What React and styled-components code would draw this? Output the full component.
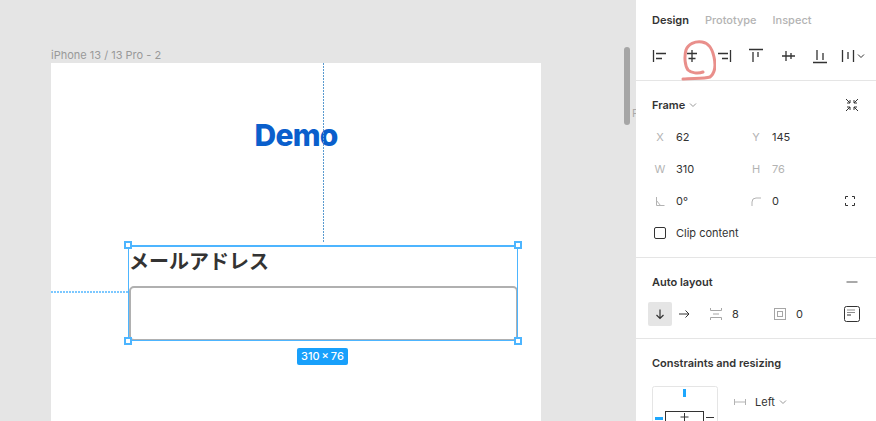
import styled, { createGlobalStyle } from "styled-components";

const GlobalStyle = createGlobalStyle`
  html, body {
    margin: 0;
    height: 100%;
    overflow: hidden;
    background: #e5e5e5;
  }
  #root {
    height: 100%;
  }
`;

const Page = styled.div`
  display: flex;
  width: 876px;
  height: 421px;
  overflow: hidden;
  font-family: Inter, "Liberation Sans", sans-serif;
  font-size: 11px;
  color: #333;
`;

/* canvas */

const Canvas = styled.div`
  position: relative;
  width: 636px;
  flex-shrink: 0;
  overflow: hidden;
  background: #e5e5e5;
  padding: 48px 0 0 51px;
  box-sizing: border-box;
`;

const FrameLabel = styled.div`
  height: 15px;
  line-height: 14px;
  font-size: 11px;
  color: #999;
`;

const Frame = styled.div`
  position: relative;
  width: 490px;
  height: 400px;
  background: #fff;
  padding-top: 55px;
  box-sizing: border-box;
`;

const Demo = styled.h1`
  margin: 0;
  height: 34px;
  line-height: 34px;
  text-align: center;
  font-size: 30px;
  font-weight: 800;
  letter-spacing: -0.75px;
  color: #0a5fcc;
`;

const Form = styled.div`
  position: relative;
  display: flex;
  flex-direction: column;
  gap: 8px;
  width: 390px;
  height: 96px;
  margin: 93px 0 0 77px;
`;

const FieldLabel = styled.div`
  height: 33px;
  line-height: 31px;
  padding-left: 1px;
  font-family: "Noto Sans CJK JP", sans-serif;
  font-size: 20px;
  font-weight: 700;
  color: #333;
`;

const Input = styled.div`
  flex: 1;
  margin-left: 1px;
  border: 2px solid #b0b0b0;
  border-radius: 5px;
`;

const Selection = styled.div`
  position: absolute;
  inset: 0;
  border-style: solid;
  border-color: #4db5ff;
  border-width: 2px 1px 1px;
`;

const Handle = styled.span`
  position: absolute;
  width: 4px;
  height: 4px;
  background: #fff;
  border: 2px solid #4db5ff;
  left: ${(p) => (p.$right ? "auto" : "-4px")};
  right: ${(p) => (p.$right ? "-4px" : "auto")};
  top: ${(p) => (p.$bottom ? "auto" : "-4px")};
  bottom: ${(p) => (p.$bottom ? "-4px" : "auto")};
`;

const SizeBadge = styled.div`
  position: absolute;
  left: 169px;
  top: 103px;
  height: 17px;
  line-height: 17px;
  padding: 0 4px;
  border-radius: 2px;
  background: #18a0fb;
  color: #fff;
  font-size: 11px;
  font-weight: 500;
  word-spacing: -1px;
  white-space: nowrap;
`;

const GuideV = styled.div`
  position: absolute;
  left: 272px;
  top: 0;
  width: 1px;
  height: 180px;
  background: repeating-linear-gradient(to bottom, #5a9bd0 0 2px, transparent 2px 3px);
`;

const GuideH = styled.div`
  position: absolute;
  left: 0;
  top: 228px;
  width: 77px;
  height: 2px;
  background: repeating-linear-gradient(to right, #7cc8ff 0 2px, transparent 2px 3px);
`;

const Scrollbar = styled.div`
  position: absolute;
  left: 624px;
  top: 47px;
  width: 6px;
  height: 78px;
  border-radius: 3px;
  background: #a6a6a6;
`;

const ClippedLabel = styled.div`
  position: absolute;
  left: 632px;
  top: 106px;
  font-size: 11px;
  color: #aaa;
`;

/* panel */

const Panel = styled.div`
  position: relative;
  width: 240px;
  flex-shrink: 0;
  background: #fff;
  overflow: hidden;
`;

const Tabs = styled.div`
  display: flex;
  gap: 16px;
  height: 40px;
  padding-left: 16px;
  align-items: center;
`;

const Tab = styled.span`
  font-weight: ${(p) => (p.$active ? 600 : 500)};
  color: ${(p) => (p.$active ? "#333" : "#b3b3b3")};
`;

const AlignRow = styled.div`
  display: flex;
  height: 40px;
  padding-left: 8px;
  align-items: flex-start;
  border-bottom: 1px solid #e5e5e5;
`;

const IconCell = styled.div`
  display: flex;
  width: ${(p) => p.$w || 32}px;
  height: 32px;
  margin-left: ${(p) => p.$shift || 0}px;
  align-items: center;
  justify-content: center;
`;

const Section = styled.section`
  padding-top: 8px;
  padding-bottom: ${(p) => p.$bottom || 0}px;
  border-bottom: ${(p) => (p.$open ? "none" : "1px solid #e5e5e5")};
`;

const SectionHead = styled.div`
  display: flex;
  align-items: center;
  justify-content: space-between;
  height: 32px;
  padding: 0 16px;
`;

const SectionTitle = styled.div`
  display: flex;
  align-items: center;
  gap: 4px;
  font-weight: 600;
  color: #333;
`;

const PropRow = styled.div`
  display: grid;
  grid-template-columns: 24px 72px 24px 72px 16px;
  align-items: center;
  height: 32px;
  padding-left: 16px;
`;

const PropLabel = styled.span`
  display: flex;
  justify-content: center;
  padding-right: 8px;
  color: #b3b3b3;
`;

const PropValue = styled.span`
  color: ${(p) => (p.$muted ? "#b3b3b3" : "#333")};
`;

const CheckRow = styled.label`
  display: flex;
  align-items: center;
  gap: 10px;
  height: 32px;
  padding-left: 18px;
`;

const Checkbox = styled.span`
  width: 10px;
  height: 10px;
  border: 1px solid #333;
  border-radius: 2px;
`;

const LayoutRow = styled.div`
  display: flex;
  align-items: center;
  height: 24px;
  margin: 4px 0 12px;
  padding-left: 12px;
`;

const DirectionButton = styled.div`
  display: flex;
  width: 24px;
  height: 24px;
  align-items: center;
  justify-content: center;
  border-radius: 2px;
  background: ${(p) => (p.$active ? "#e5e5e5" : "transparent")};
`;

const LayoutIcon = styled.div`
  display: flex;
  margin-left: ${(p) => p.$gap}px;
`;

const LayoutValue = styled.span`
  width: ${(p) => p.$w}px;
  margin-left: 10px;
`;

const ConstraintRow = styled.div`
  display: flex;
  align-items: flex-start;
  gap: 16px;
  margin-top: 7px;
  padding: 0 16px;
`;

const ConstraintSelect = styled.div`
  display: flex;
  align-items: center;
  height: 32px;
  gap: 4px;
  color: #333;
`;

const SelectValue = styled.span`
  margin-left: 5px;
`;

const Scribble = styled.svg`
  position: absolute;
  left: 40px;
  top: 36px;
`;

function Icon({ size = 16, color = "#333", width = 1, children }) {
  return (
    <svg width={size} height={size} viewBox={`0 0 ${size} ${size}`} fill="none" stroke={color} strokeWidth={width}>
      {children}
    </svg>
  );
}

function Chevron({ color = "#999" }) {
  return (
    <svg width="8" height="6" viewBox="0 0 8 6" fill="none" stroke={color}>
      <path d="M1 1.5 4 4.5 7 1.5" />
    </svg>
  );
}

function ConstraintBox() {
  return (
    <svg width="66" height="66" viewBox="0 0 66 66" fill="none">
      <rect x="0.5" y="0.5" width="65" height="65" rx="2" stroke="#e5e5e5" />
      <rect x="13.5" y="25.5" width="38" height="30" stroke="#333" />
      <path d="M32.5 27v8M28.5 31h8" stroke="#333" />
      <rect x="31" y="3" width="3" height="8" fill="#1ea7fd" />
      <rect x="3" y="31" width="8" height="3" fill="#1ea7fd" />
      <path d="M54 31.5h8" stroke="#333" />
    </svg>
  );
}

const alignIcons = [
  <path key="l" d="M1.5 2v12M4 5.5h10M4 10.5h6" />,
  <path key="c" d="M8 2v12M3 5.5h10M4.5 10.5h7" />,
  <path key="r" d="M14.5 2v12M2 5.5h10M6 10.5h6" />,
  <path key="t" d="M1 1.5h14M5 4v10M10 4v5" />,
  <path key="m" d="M2 8h13M6 3v10M11 5v6" />,
  <path key="b" d="M1 14.5h14M5 2v10M11 5v7" />,
];

export default function App() {
  return (
    <Page>
      <GlobalStyle />
      <Canvas>
        <FrameLabel>iPhone 13 / 13 Pro - 2</FrameLabel>
        <Frame>
          <GuideV />
          <GuideH />
          <Demo>Demo</Demo>
          <Form>
            <FieldLabel>メールアドレス</FieldLabel>
            <Input />
            <Selection />
            <Handle />
            <Handle $right />
            <Handle $bottom />
            <Handle $right $bottom />
            <SizeBadge>310 × 76</SizeBadge>
          </Form>
        </Frame>
        <Scrollbar />
        <ClippedLabel>F</ClippedLabel>
      </Canvas>

      <Panel>
        <Tabs>
          <Tab $active>Design</Tab>
          <Tab>Prototype</Tab>
          <Tab>Inspect</Tab>
        </Tabs>
        <AlignRow>
          {alignIcons.map((path) => (
            <IconCell key={path.key}>
              <Icon width={1.3}>{path}</Icon>
            </IconCell>
          ))}
          <IconCell $w={24} $shift={5}>
            <Icon width={1.3}>
              <path d="M1.5 2v12M12.5 2v12M7 4v7" />
            </Icon>
            <Chevron color="#333" />
          </IconCell>
        </AlignRow>

        <Section $bottom={8}>
          <SectionHead>
            <SectionTitle>
              Frame <Chevron />
            </SectionTitle>
            <Icon>
              <path d="M2 2l4 4M6 3v3H3M14 2l-4 4M10 3v3h3M2 14l4-4M6 13v-3H3M14 14l-4-4M10 13v-3h3" />
            </Icon>
          </SectionHead>
          <PropRow>
            <PropLabel>X</PropLabel>
            <PropValue>62</PropValue>
            <PropLabel>Y</PropLabel>
            <PropValue>145</PropValue>
          </PropRow>
          <PropRow>
            <PropLabel>W</PropLabel>
            <PropValue>310</PropValue>
            <PropLabel>H</PropLabel>
            <PropValue $muted>76</PropValue>
          </PropRow>
          <PropRow>
            <PropLabel>
              <Icon size={10} color="#b3b3b3">
                <path d="M1.5 1v8.5H9.5M1.5 4.5l4 5" />
              </Icon>
            </PropLabel>
            <PropValue>0°</PropValue>
            <PropLabel>
              <Icon size={10} color="#b3b3b3">
                <path d="M1 10V6a4 4 0 0 1 4-4h5" />
              </Icon>
            </PropLabel>
            <PropValue>0</PropValue>
            <Icon size={12}>
              <path d="M1.5 4V1.5H4M8 1.5h2.5V4M1.5 8v2.5H4M8 10.5h2.5V8" />
            </Icon>
          </PropRow>
          <CheckRow>
            <Checkbox />
            Clip content
          </CheckRow>
        </Section>

        <Section>
          <SectionHead>
            <SectionTitle>Auto layout</SectionTitle>
            <Icon color="#8c8c8c">
              <path d="M2.5 8h11" strokeWidth="1.5" />
            </Icon>
          </SectionHead>
          <LayoutRow>
            <DirectionButton $active>
              <Icon size={12}>
                <path d="M6 1.5v9M2.5 7 6 10.5 9.5 7" strokeWidth="1.2" />
              </Icon>
            </DirectionButton>
            <DirectionButton>
              <Icon size={12}>
                <path d="M1 6h10M7.5 2.5 11 6 7.5 9.5" />
              </Icon>
            </DirectionButton>
            <LayoutIcon $gap={14}>
              <Icon size={12} color="#a6a6a6">
                <path d="M0.5 0v2.5h11V0M3 6h6M0.5 12V9.5h11V12" />
              </Icon>
            </LayoutIcon>
            <LayoutValue $w={42}>8</LayoutValue>
            <LayoutIcon $gap={0}>
              <Icon size={12} color="#a6a6a6">
                <rect x="0.5" y="0.5" width="11" height="11" />
                <rect x="3.5" y="3.5" width="5" height="5" />
              </Icon>
            </LayoutIcon>
            <LayoutValue $w={48}>0</LayoutValue>
            <Icon>
              <rect x="0.5" y="0.5" width="15" height="15" rx="2" />
              <path d="M3 4h8M3 6.5h8" stroke="#8c8c8c" />
              <path d="M3 9h4" />
            </Icon>
          </LayoutRow>
        </Section>

        <Section $open>
          <SectionHead>
            <SectionTitle>Constraints and resizing</SectionTitle>
          </SectionHead>
          <ConstraintRow>
            <ConstraintBox />
            <ConstraintSelect>
              <Icon size={12} color="#b3b3b3">
                <path d="M0.5 3v6M11.5 3v6M1 6h10" />
              </Icon>
              <SelectValue>Left</SelectValue>
              <Chevron />
            </ConstraintSelect>
          </ConstraintRow>
        </Section>

        <Scribble width="40" height="48" viewBox="0 0 40 48" fill="none">
          <path
            d="M7 43C16 42 28 43 34 41C39 37 40 30 38 21C36 12 33 7 26 6C19 5 12 8 10 14C8 21 9 30 12 34C15 37 22 38 27 36"
            stroke="#e98f8b"
            strokeWidth="3"
            strokeLinecap="round"
          />
        </Scribble>
      </Panel>
    </Page>
  );
}
